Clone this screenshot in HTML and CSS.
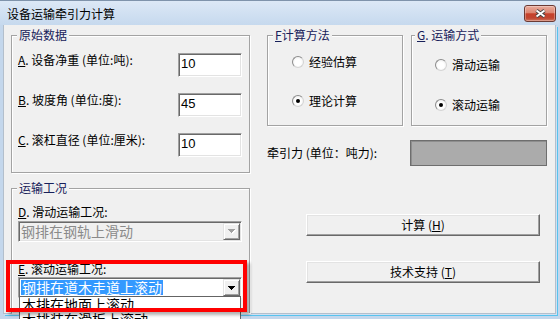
FILE: index.html
```html
<!DOCTYPE html>
<html lang="zh-CN">
<head>
<meta charset="utf-8">
<title>设备运输牵引力计算</title>
<link rel="stylesheet" href="styles.css">
</head>
<body>
<div class="window">
  <div class="titlebar">
    <span class="title">设备运输牵引力计算</span>
    <span class="close">
      <svg width="13" height="9" viewBox="0 0 13 9">
        <path d="M2.5 1.5 L10.5 7.5 M10.5 1.5 L2.5 7.5" stroke="#3d3d3d" stroke-width="3.6"/>
        <path d="M2.5 1.5 L10.5 7.5 M10.5 1.5 L2.5 7.5" stroke="#ffffff" stroke-width="2"/>
      </svg>
    </span>
  </div>
  <div class="client">
    <div class="col-left">
      <div class="group g-raw">
        <div class="legend">原始数据</div>
        <div class="field-row"><span class="lbl"><u>A</u>. 设备净重 (单位:吨):</span><span class="textbox">10</span></div>
        <div class="field-row"><span class="lbl"><u>B</u>. 坡度角 (单位:度):</span><span class="textbox">45</span></div>
        <div class="field-row"><span class="lbl"><u>C</u>. 滚杠直径 (单位:厘米):</span><span class="textbox">10</span></div>
      </div>
      <div class="group g-work">
        <div class="legend">运输工况</div>
        <div class="lbl"><u>D</u>. 滑动运输工况:</div>
        <div class="combo combo-disabled">
          <span class="combo-text">钢排在钢轨上滑动</span>
          <span class="combo-btn">
            <svg width="8" height="5" viewBox="0 0 8 5" shape-rendering="crispEdges"><path d="M1 1h7v1h-1v1h-1v1h-1v1h-1v-1h-1v-1h-1v-1h-1z" fill="#ffffff"/><path d="M0 0h7v1h-1v1h-1v1h-1v1h-1v-1h-1v-1h-1v-1h-1z" fill="#a0a0a0"/></svg>
          </span>
        </div>
        <div class="mark">
          <div class="lbl"><u>E</u>. 滚动运输工况:</div>
          <div class="combo combo-open">
            <span class="combo-text"><span class="sel">钢排在道木走道上滚动</span></span>
            <span class="combo-btn">
              <svg width="7" height="4" viewBox="0 0 7 4" shape-rendering="crispEdges"><path d="M0 0h7v1h-1v1h-1v1h-1v1h-1v-1h-1v-1h-1v-1h-1z" fill="#000000"/></svg>
            </span>
            <div class="dropdown">
              <div class="item">木排在地面上滚动</div>
              <div class="item">木排装在滑板上滚动</div>
            </div>
          </div>
        </div>
      </div>
    </div>
    <div class="col-right">
      <div class="opt-row">
        <div class="group g-method">
          <div class="legend"><u>F</u>计算方法</div>
          <div class="radio-row"><span class="radio"></span><span>经验估算</span></div>
          <div class="radio-row"><span class="radio checked"></span><span>理论计算</span></div>
        </div>
        <div class="group g-mode">
          <div class="legend legend-tight"><u>G</u>. 运输方式</div>
          <div class="radio-row"><span class="radio"></span><span>滑动运输</span></div>
          <div class="radio-row"><span class="radio checked"></span><span>滚动运输</span></div>
        </div>
      </div>
      <div class="result-row">
        <span class="lbl">牵引力 (单位：吨力):</span>
        <span class="result-box"></span>
      </div>
      <div class="btn btn-calc">计算 (<u>H</u>)</div>
      <div class="btn btn-support">技术支持 (<u>T</u>)</div>
    </div>
  </div>
</div>
</body>
</html>
```
FILE: styles.css
```css
* { box-sizing: border-box; }
html, body { margin: 0; padding: 0; }
body {
  width: 560px;
  height: 319px;
  overflow: hidden;
  background: #c4d7ec;
  font-family: "Noto Sans CJK SC", "Noto Sans", sans-serif;
  font-size: 12px;
  color: #000;
}
u { text-decoration-thickness: 1px; text-underline-offset: 1px; }

.window {
  position: relative;
  width: 560px;
  height: 319px;
  overflow: hidden;
  background: #c4d7ec;
  border-top: 1px solid #7f93ab;
}

.titlebar {
  display: flex;
  align-items: flex-start;
  height: 24px;
  padding-left: 7px;
  background: linear-gradient(#dce8f6, #c6d9ee);
}
.title {
  margin-top: 5px;
  font-size: 12px;
  line-height: 16px;
  color: #000;
}
.close {
  margin-left: auto;
  margin-right: 4px;
  margin-top: 4px;
  width: 32px;
  height: 17px;
  border: 1px solid #6b3a34;
  border-radius: 3px;
  background: linear-gradient(#e9ab9c 0%, #dc8672 45%, #c6412b 52%, #c04631 80%, #d0765e 100%);
  display: flex;
  align-items: center;
  justify-content: center;
  box-shadow: inset 0 0 0 1px rgba(255,255,255,0.3);
}
.close svg { display: block; }

.client {
  display: flex;
  gap: 17px;
  margin-left: 3px;
  width: 553px;
  height: 289px;
  padding: 10px 0 0 7px;
  background: #f0f0f0;
  border: 1px solid #b3bfcc;
  border-top: 0;
  box-shadow: 1px 1px 0 #d0e0f1, 2px 2px 0 #58c3ee;
}

.col-left {
  display: flex;
  flex-direction: column;
  width: 239px;
}
.col-right {
  display: flex;
  flex-direction: column;
  width: 280px;
}

.group {
  position: relative;
  border: 1px solid #a3a3a3;
  box-shadow: inset 1px 1px 0 #ffffff, 1px 1px 0 #ffffff;
}
.legend {
  position: absolute;
  top: -8px;
  left: 5px;
  padding: 0 2px;
  background: #f0f0f0;
  line-height: 14px;
  color: #17205a;
  white-space: nowrap;
}
.legend-tight { left: 3px; }

.lbl {
  line-height: 14px;
  white-space: nowrap;
}

.g-raw {
  height: 138px;
  padding: 17px 7px 0 6px;
  display: flex;
  flex-direction: column;
  gap: 16px;
}
.field-row {
  display: flex;
  justify-content: space-between;
  align-items: flex-start;
  height: 24px;
}
.textbox {
  width: 64px;
  height: 24px;
  padding: 2px 0 0 2px;
  border: 1px solid;
  border-color: #a0a0a0 #ffffff #ffffff #a0a0a0;
  box-shadow: inset 1px 1px 0 #696969, inset -1px -1px 0 #e3e3e3;
  background: #fff;
  font-family: "Liberation Sans", Arial, sans-serif;
  font-size: 13px;
  line-height: 16px;
}

.g-work {
  flex: 1;
  margin-top: 15px;
  border-bottom: 0;
  padding: 16px 7px 0 6px;
}

.combo {
  position: relative;
  display: flex;
  height: 21px;
  margin-top: 2px;
  padding: 1px;
  border: 1px solid;
  border-color: #a0a0a0 #ffffff #ffffff #a0a0a0;
  box-shadow: inset 1px 1px 0 #696969, inset -1px -1px 0 #e3e3e3;
  background: #fff;
}
.combo-disabled { background: #f0f0f0; }
.combo-text {
  flex: 1;
  padding-left: 1px;
  font-size: 14px;
  line-height: 17px;
  white-space: nowrap;
}
.combo-disabled .combo-text { color: #8a8a8a; }
.sel {
  display: inline-block;
  padding: 0 1px;
  line-height: 15px;
  background: #3399ff;
  color: #fff;
}
.combo-btn {
  width: 17px;
  height: 17px;
  display: flex;
  align-items: center;
  justify-content: center;
  background: #f0f0f0;
  border: 1px solid;
  border-color: #e3e3e3 #696969 #696969 #e3e3e3;
  box-shadow: inset 1px 1px 0 #ffffff, inset -1px -1px 0 #a0a0a0;
}
.combo-btn svg { display: block; }

.mark {
  position: relative;
  margin-top: 20px;
}
.mark .combo { margin-top: 1px; }
.mark::after {
  content: "";
  position: absolute;
  top: -2px;
  right: -5px;
  bottom: -14px;
  left: -12px;
  border: 4px solid #ff0000;
  box-shadow: 3px 3px 3px rgba(0,0,0,0.3);
  pointer-events: none;
}

.dropdown {
  position: absolute;
  top: calc(100% - 1px);
  left: 0;
  width: 100%;
  background: #fff;
  border: 1px solid #646464;
  padding-left: 2px;
}
.item {
  font-size: 14px;
  line-height: 15px;
  height: 15px;
  white-space: nowrap;
}

.opt-row {
  display: flex;
  gap: 8px;
  height: 91px;
}
.g-method, .g-mode {
  width: 136px;
  display: flex;
  flex-direction: column;
}
.g-method { padding: 19px 0 0 24px; gap: 25px; }
.g-mode { padding: 22px 0 0 23px; gap: 26px; }
.radio-row {
  display: flex;
  align-items: center;
  gap: 5px;
  height: 14px;
  line-height: 14px;
}
.radio {
  width: 12px;
  height: 12px;
  border-radius: 50%;
  border: 1px solid;
  border-color: #8c8c8c #d4d4d4 #d4d4d4 #8c8c8c;
  background: radial-gradient(circle at 50% 55%, #ffffff 40%, #e6e6e6 100%);
  display: flex;
  align-items: center;
  justify-content: center;
}
.radio.checked::after {
  content: "";
  width: 4px;
  height: 4px;
  border-radius: 50%;
  background: #000;
}

.result-row {
  margin-top: 14px;
  display: flex;
  justify-content: space-between;
  align-items: center;
  height: 26px;
}
.result-box {
  width: 137px;
  height: 26px;
  background: #ababab;
  border: 1px solid #6e6e6e;
  box-shadow: inset 1px 1px 0 #8e8e8e;
}

.btn {
  margin-left: 39px;
  width: 234px;
  height: 22px;
  display: flex;
  align-items: center;
  justify-content: center;
  line-height: 14px;
  background: #f0f0f0;
  border: 1px solid;
  border-color: #ffffff #696969 #696969 #ffffff;
  box-shadow: inset -1px -1px 0 #a0a0a0, inset 1px 1px 0 #e3e3e3;
}
.btn-calc { margin-top: 48px; }
.btn-support { margin-top: 25px; }
```
